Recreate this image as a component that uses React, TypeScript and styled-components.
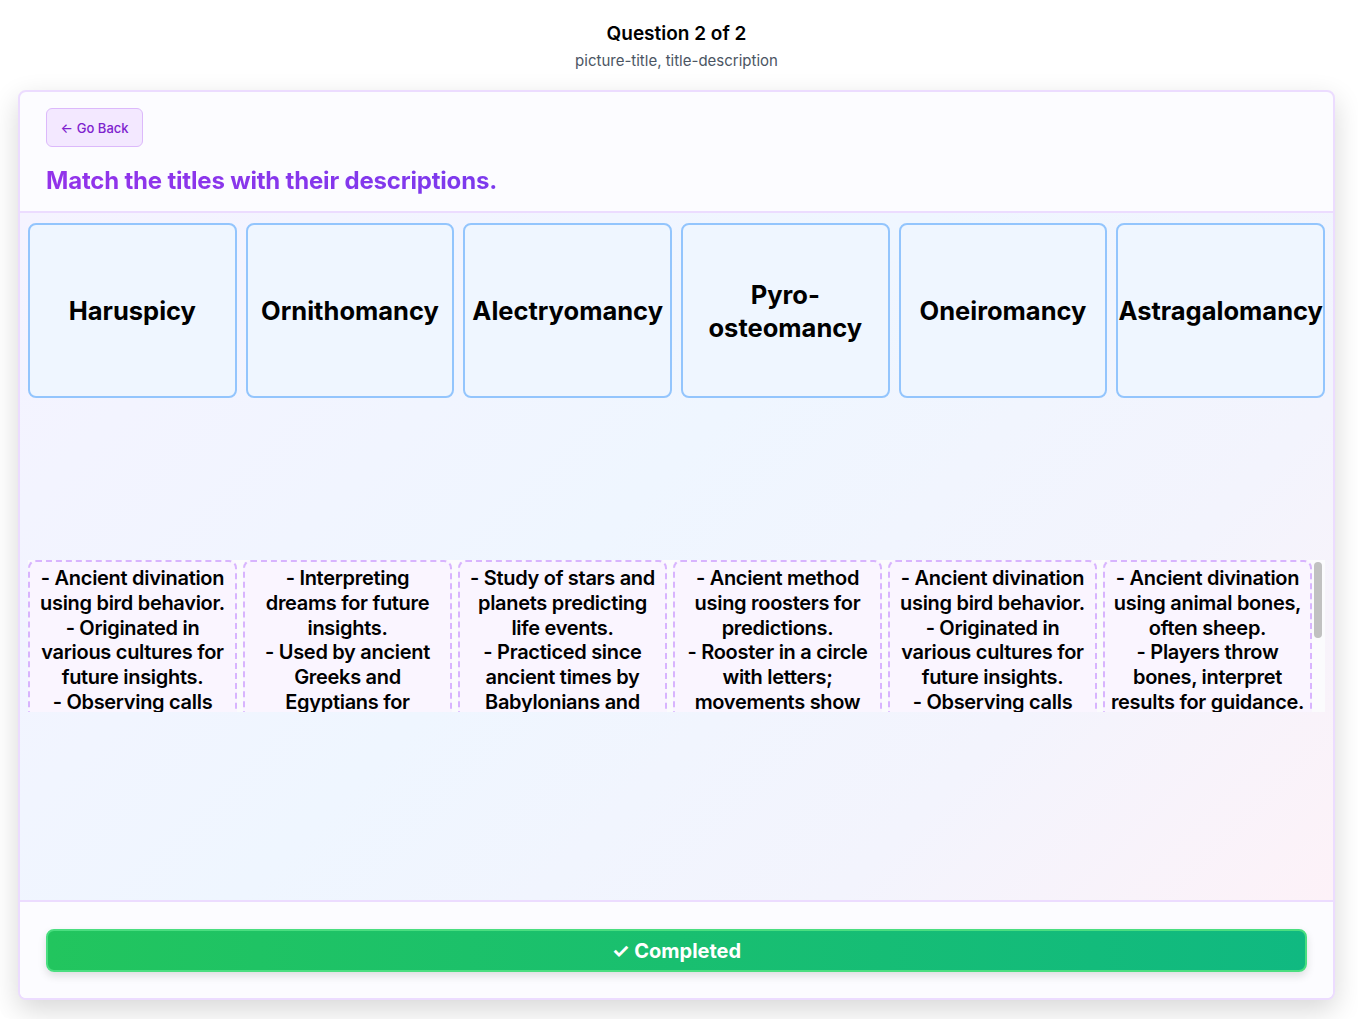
import React from "react";
import styled, { createGlobalStyle } from "styled-components";

const Global = createGlobalStyle`
  html, body { margin: 0; padding: 0; background: #ffffff; }
  body { font-family: Inter, "Noto Sans", sans-serif; color: #000; }
  * { box-sizing: border-box; }
`;

const Page = styled.div`
  width: 1358px;
  height: 1019px;
  border-radius: 10px;
  overflow: hidden;
  padding: 0 23px 0 18px;
  background: #ffffff;
`;

const Top = styled.header`
  display: flex;
  flex-direction: column;
  align-items: center;
  padding-top: 21px;
  padding-bottom: 19px;
`;

const QTitle = styled.h1`
  margin: 0;
  font-size: 19px;
  line-height: 25px;
  font-weight: 600;
  color: #000;
`;

const QSub = styled.p`
  margin: 5px 0 0;
  font-size: 15px;
  line-height: 20px;
  color: #4b5563;
`;

const Card = styled.section`
  height: 910px;
  border: 2px solid #ecdcff;
  border-radius: 8px;
  display: flex;
  flex-direction: column;
  overflow: hidden;
  box-shadow: 0 10px 28px rgba(0, 0, 0, 0.16);
  background: #fcfcff;
`;

const CardHead = styled.div`
  padding: 16px 26px 14px;
  border-bottom: 2px solid #ecdcff;
  display: flex;
  flex-direction: column;
  align-items: flex-start;
  gap: 18px;
`;

const BackButton = styled.button`
  height: 39px;
  width: 97px;
  border: 1px solid #dcb9fb;
  background: #f3e8ff;
  color: #7e22ce;
  border-radius: 6px;
  font-family: Inter, sans-serif;
  font-size: 13px;
  font-weight: 500;
  display: flex;
  align-items: center;
  justify-content: center;
  gap: 4px;
  padding: 0;
`;

const Heading = styled.h2`
  margin: 0;
  font-size: 24px;
  line-height: 32px;
  font-weight: 700;
  letter-spacing: -0.008em;
  background: linear-gradient(90deg, #9333ea, #7c3aed);
  -webkit-background-clip: text;
  background-clip: text;
  color: transparent;
`;

const Main = styled.div`
  flex: 1;
  padding: 10px 8px 0;
  background: linear-gradient(135deg, #f5f3ff 0%, #eff6ff 45%, #f3f4fd 75%, #fdf2f8 100%);
  display: flex;
  flex-direction: column;
`;

const TitleRow = styled.div`
  display: grid;
  grid-template-columns: repeat(6, 1fr);
  gap: 9px;
`;

const TitleCard = styled.div`
  height: 175px;
  background: #eff6ff;
  border: 2px solid #93c5fd;
  border-radius: 8px;
  display: flex;
  align-items: center;
  justify-content: center;
  text-align: center;
  font-size: 25.5px;
  line-height: 33px;
  font-weight: 700;
  color: #000;
  overflow: hidden;
`;

const DescArea = styled.div`
  position: relative;
  margin-top: 162px;
  height: 152px;
  padding-right: 13px;
  background: #fbfbfd;
`;

const DescScroller = styled.div`
  height: 100%;
  overflow: hidden;
`;

const ScrollThumb = styled.div`
  position: absolute;
  right: 3px;
  top: 2px;
  width: 8px;
  height: 76px;
  border-radius: 4px;
  background: #c1c1c1;
`;

const DescRow = styled.div`
  display: grid;
  grid-template-columns: repeat(6, 1fr);
  gap: 6px;
  padding-bottom: 40px;
`;

const DescCard = styled.div`
  background: #faf5ff;
  border: 2px dashed #d8b4fe;
  border-radius: 8px;
  padding: 4px 5px;
  text-align: center;
  font-size: 20px;
  line-height: 24.75px;
  font-weight: 600;
  letter-spacing: -0.015em;
  white-space: pre-line;
  color: #000;
`;

const Foot = styled.div`
  border-top: 2px solid #ecdcff;
  padding: 27px 26px 26px;
  background: #fcfcff;
`;

const DoneButton = styled.button`
  width: 100%;
  height: 43px;
  border: 2px solid #4ade80;
  border-radius: 8px;
  background: linear-gradient(90deg, #22c55e, #10b981);
  color: #fff;
  font-family: Inter, sans-serif;
  font-size: 20px;
  font-weight: 700;
  box-shadow: 0 4px 8px rgba(0, 0, 0, 0.12);
`;

const titles = ["Haruspicy", "Ornithomancy", "Alectryomancy", "Pyro-osteomancy", "Oneiromancy", "Astragalomancy"];

const descs = [
  "- Ancient divination using bird behavior.\n- Originated in various cultures for future insights.\n- Observing calls and flight patterns reveals omens.",
  "- Interpreting dreams for future insights.\n- Used by ancient Greeks and Egyptians for guidance and prophecy.",
  "- Study of stars and planets predicting life events.\n- Practiced since ancient times by Babylonians and Greeks.",
  "- Ancient method using roosters for predictions.\n- Rooster in a circle with letters; movements show answers.",
  "- Ancient divination using bird behavior.\n- Originated in various cultures for future insights.\n- Observing calls and flight patterns reveals omens.",
  "- Ancient divination using animal bones, often sheep.\n- Players throw bones, interpret results for guidance.",
];

export default function App() {
  return (
    <>
      <Global />
      <Page>
        <Top>
          <QTitle>Question 2 of 2</QTitle>
          <QSub>picture-title, title-description</QSub>
        </Top>
        <Card>
          <CardHead>
            <BackButton>
              <span>←</span>
              <span>Go Back</span>
            </BackButton>
            <Heading>Match the titles with their descriptions.</Heading>
          </CardHead>
          <Main>
            <TitleRow>
              {titles.map((t) => (
                <TitleCard key={t}>{t}</TitleCard>
              ))}
            </TitleRow>
            <DescArea>
              <DescScroller>
                <DescRow>
                  {descs.map((d, i) => (
                    <DescCard key={i}>{d}</DescCard>
                  ))}
                </DescRow>
              </DescScroller>
              <ScrollThumb />
            </DescArea>
          </Main>
          <Foot>
            <DoneButton>✓ Completed</DoneButton>
          </Foot>
        </Card>
      </Page>
    </>
  );
}
